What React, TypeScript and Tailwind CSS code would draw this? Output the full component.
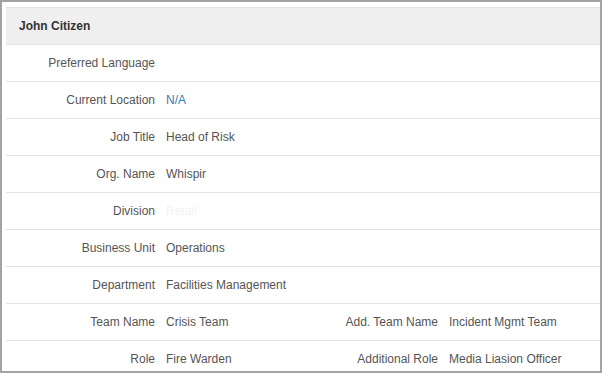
import React from "react";

interface Field {
  label: string;
  value?: string;
  link?: boolean;
  faint?: boolean;
}

interface Row {
  left: Field;
  right?: Field;
}

const rows: Row[] = [
  { left: { label: "Preferred Language" } },
  { left: { label: "Current Location", value: "N/A", link: true } },
  { left: { label: "Job Title", value: "Head of Risk" } },
  { left: { label: "Org. Name", value: "Whispir" } },
  { left: { label: "Division", value: "Retail", faint: true } },
  { left: { label: "Business Unit", value: "Operations" } },
  { left: { label: "Department", value: "Facilities Management" } },
  {
    left: { label: "Team Name", value: "Crisis Team" },
    right: { label: "Add. Team Name", value: "Incident Mgmt Team" },
  },
  {
    left: { label: "Role", value: "Fire Warden" },
    right: { label: "Additional Role", value: "Media Liasion Officer" },
  },
];

const Pair: React.FC<{ field: Field }> = ({ field }) => (
  <div className="flex items-center">
    <div className="w-[149px] text-right text-[#555] whitespace-nowrap">
      {field.label}
    </div>
    <div
      className={`w-[134px] pl-[11px] whitespace-nowrap ${
        field.link
          ? "text-[#337ab7]"
          : field.faint
          ? "text-[#f2f2f2]"
          : "text-[#555]"
      }`}
    >
      {field.value}
    </div>
  </div>
);

export default function App() {
  return (
    <div
      className="w-[602px] h-[373px] border-2 border-[#a3a3a3] bg-white overflow-hidden pt-[5px] pl-[4px] text-[12px]"
      style={{ fontFamily: '"Liberation Sans", Arial, sans-serif' }}
    >
      {/* Contact card */}
      <div className="w-full">
        <div className="h-[38px] flex items-center border-y border-[#e2e2e2] bg-[#efefef] pl-[13px]">
          <span className="font-bold text-[#333]">John Citizen</span>
        </div>
        {rows.map((row, idx) => (
          <div
            key={idx}
            className="h-[37px] flex items-center border-b border-[#e2e2e2]"
          >
            <Pair field={row.left} />
            {row.right && <Pair field={row.right} />}
          </div>
        ))}
      </div>
    </div>
  );
}
